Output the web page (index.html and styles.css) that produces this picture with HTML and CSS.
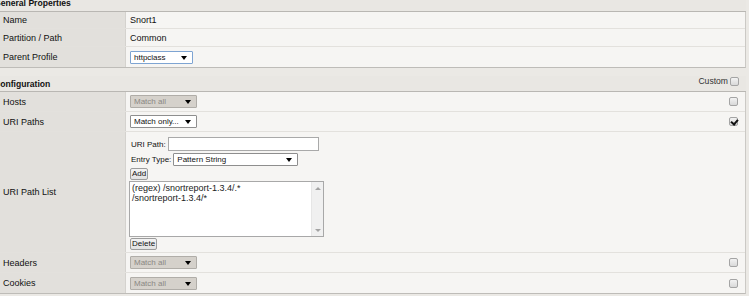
FILE: index.html
```html
<!DOCTYPE html>
<html lang="en">
<head>
    <meta charset="UTF-8">
    <title>Profile Properties</title>
    <link rel="stylesheet" href="styles.css">
</head>
<body>
    <div class="page">
        <div class="section-title">General Properties</div>
        <div class="section">
            <div class="row h17">
                <div class="label">Name</div>
                <div class="value">Snort1</div>
            </div>
            <div class="row h18">
                <div class="label">Partition / Path</div>
                <div class="value">Common</div>
            </div>
            <div class="row h20 last">
                <div class="label">Parent Profile</div>
                <div class="value">
                    <span class="select focused w63"><select><option>httpclass</option></select></span>
                </div>
            </div>
        </div>

        <div class="section-title config">
            <span>Configuration</span>
            <span class="custom">Custom <span class="check"></span></span>
        </div>
        <div class="section">
            <div class="row h20">
                <div class="label">Hosts</div>
                <div class="value">
                    <span class="select disabled w67"><select disabled><option>Match all</option></select></span>
                </div>
                <div class="box"><span class="check"></span></div>
            </div>
            <div class="row h20">
                <div class="label">URI Paths</div>
                <div class="value">
                    <span class="select w67"><select><option>Match only...</option></select></span>
                </div>
                <div class="box"><span class="check checked"></span></div>
            </div>
            <div class="row h121">
                <div class="label">URI Path List</div>
                <div class="value list-editor">
                    <div class="field">
                        <span>URI Path:</span>
                        <input class="text-input" type="text">
                    </div>
                    <div class="field">
                        <span>Entry Type:</span>
                        <span class="select w125"><select><option>Pattern String</option></select></span>
                    </div>
                    <button class="btn">Add</button>
                    <div class="listbox">
                        <div class="list-items">
                            <div>(regex) /snortreport-1.3.4/.*</div>
                            <div>/snortreport-1.3.4/*</div>
                        </div>
                        <div class="scroll">
                            <span class="arrow-up"></span>
                            <span class="arrow-down"></span>
                        </div>
                    </div>
                    <button class="btn">Delete</button>
                </div>
                <div class="box"></div>
            </div>
            <div class="row h20">
                <div class="label">Headers</div>
                <div class="value">
                    <span class="select disabled w67"><select disabled><option>Match all</option></select></span>
                </div>
                <div class="box"><span class="check"></span></div>
            </div>
            <div class="row h20 last">
                <div class="label">Cookies</div>
                <div class="value">
                    <span class="select disabled w67"><select disabled><option>Match all</option></select></span>
                </div>
                <div class="box"><span class="check"></span></div>
            </div>
        </div>
    </div>
</body>
</html>
```

FILE: styles.css
```css
:root {
    --page-bg: #ebe9e5;
    --title-bg: #e9e7e3;
    --label-bg: #e2e0dc;
    --value-bg: #f6f5f3;
    --line: #e3e1dd;
    --text: #111;
}

* {
    box-sizing: border-box;
}

body {
    margin: 0;
    background: var(--page-bg);
    font-family: "Liberation Sans", Arial, sans-serif;
    font-size: 9px;
    color: var(--text);
}

.page {
    width: 749px;
    margin: -4px 0 0 -3px;
}

.section-title {
    height: 16px;
    line-height: 15px;
    text-indent: -3px;
    font-weight: bold;
    font-size: 8.6px;
    background: var(--title-bg);
    border-bottom: 1px solid #b9b7b3;
    display: flex;
    justify-content: space-between;
}

.section-title.config {
    margin-top: 8px;
    line-height: 16px;
}

.custom {
    font-weight: normal;
    font-size: 8.6px;
    color: #333;
    text-indent: 0;
    display: flex;
    align-items: center;
    gap: 2px;
    height: 12px;
    padding-right: 7px;
    margin-top: -1px;
    line-height: 12px;
}

.section {
    border-right: 1px solid #cbc9c5;
    border-bottom: 1px solid #bebcb8;
}

.row {
    display: flex;
    border-bottom: 1px solid var(--line);
}

.row.last {
    border-bottom: none;
}

.h17 { height: 17px; }
.h18 { height: 18px; }
.h20 { height: 20px; }
.h121 { height: 121px; }

.label {
    width: 129px;
    flex: none;
    padding-left: 6px;
    background: var(--label-bg);
    border-right: 1px solid #d4d2ce;
    display: flex;
    align-items: center;
}

.value {
    flex: 1;
    padding-left: 4px;
    background: var(--value-bg);
    display: flex;
    align-items: center;
}

.box {
    width: 20px;
    flex: none;
    background: var(--value-bg);
    display: flex;
    align-items: center;
    padding-left: 4px;
}

/* checkbox */
.check {
    width: 9px;
    height: 9px;
    border: 1px solid #a4a4a4;
    border-radius: 2px;
    background: linear-gradient(#f2f2f2, #d9d9d9);
    display: inline-block;
    position: relative;
}

.check.checked::after {
    content: "";
    position: absolute;
    left: 2px;
    top: 0;
    width: 3px;
    height: 5px;
    border: solid #111;
    border-width: 0 2px 2px 0;
    transform: rotate(40deg);
}

/* select boxes */
.select {
    position: relative;
    display: inline-block;
    height: 13px;
}

.select select {
    appearance: none;
    -webkit-appearance: none;
    width: 100%;
    height: 13px;
    margin: 0;
    padding: 0 0 0 3px;
    border: 1px solid #8e8e8e;
    border-radius: 1px;
    background: #fff;
    font: inherit;
    font-size: 8px;
    line-height: 11px;
    color: #111;
}

.select::after {
    content: "";
    position: absolute;
    right: 6px;
    top: 5px;
    border-left: 3px solid transparent;
    border-right: 3px solid transparent;
    border-top: 4px solid #000;
}

.select.disabled select {
    background: #d5d1cb;
    border-color: #b0ada8;
    color: #8a8884;
    opacity: 1;
}

.select.focused select {
    border-color: #7ea4d2;
}

.w63 { width: 63px; }
.w67 { width: 67px; }
.w125 { width: 125px; }

/* uri path list editor */
.list-editor {
    flex-direction: column;
    align-items: flex-start;
    padding-top: 5px;
    gap: 2px;
    font-size: 8px;
}

.field {
    display: flex;
    align-items: center;
    gap: 2px;
    padding-left: 1px;
}

.text-input {
    width: 151px;
    height: 14px;
    margin: 0;
    border: 1px solid #a9a9a9;
    background: #fff;
    padding: 0;
}

.btn {
    height: 12px;
    margin: 0;
    padding: 0 1px;
    font: inherit;
    font-size: 8px;
    line-height: 10px;
    color: #111;
    background: linear-gradient(#f3f3f3, #e2e2e2);
    border: 1px solid #9c9c9c;
    border-radius: 2px;
}

.listbox {
    width: 195px;
    height: 56px;
    margin: -1px 0 -1px -1px;
    border: 1px solid #a8a8a8;
    background: #fff;
    display: flex;
}

.list-items {
    flex: 1;
    padding: 1px 0 0 2px;
    line-height: 10px;
    font-size: 9px;
    color: #222;
}

.scroll {
    width: 12px;
    background: #f0f0f0;
    border-left: 1px solid #e6e6e6;
    display: flex;
    flex-direction: column;
    justify-content: space-between;
    align-items: center;
    padding: 5px 0 4px;
}

.arrow-up {
    border-left: 3px solid transparent;
    border-right: 3px solid transparent;
    border-bottom: 3px solid #a3a3a3;
}

.arrow-down {
    border-left: 3px solid transparent;
    border-right: 3px solid transparent;
    border-top: 3px solid #a3a3a3;
}
```
